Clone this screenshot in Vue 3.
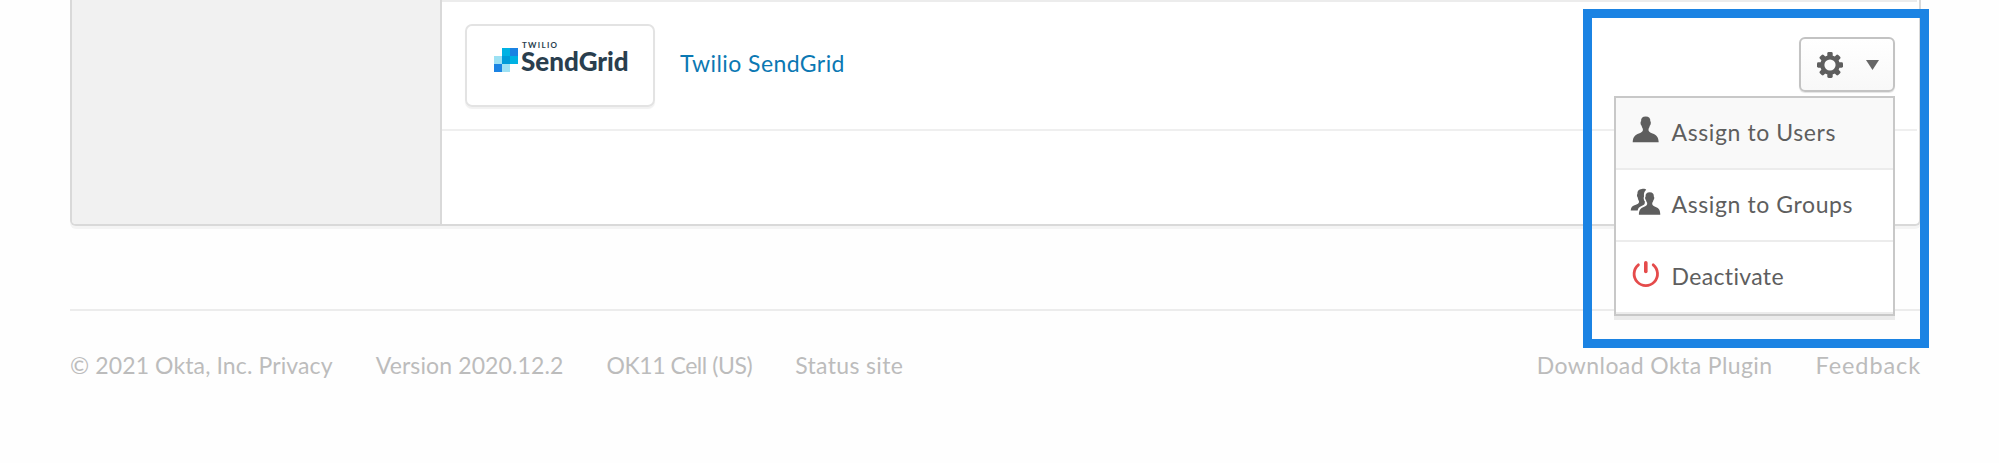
<script setup>
const leftLinks = [
  { text: '© 2021 Okta, Inc. Privacy', cls: 'privacy' },
  { text: 'Version 2020.12.2', cls: 'version' },
  { text: 'OK11 Cell (US)', cls: 'cell' },
  { text: 'Status site', cls: 'status' },
]
const rightLinks = [
  { text: 'Download Okta Plugin', cls: 'plugin' },
  { text: 'Feedback', cls: 'feedback' },
]
</script>

<template>
  <div class="page">
    <section class="card">
      <aside class="sidebar"></aside>
      <div class="list">
        <div class="row">
          <div class="logo-box">
            <svg class="mark" width="24" height="24" viewBox="0 0 24 24" shape-rendering="crispEdges">
              <path fill="#9de1f3" d="M0 8h8v8H0zM8 16h8v8H8z" />
              <path fill="#00b2e3" d="M8 0h8v8H8zM16 8h8v8h-8z" />
              <path fill="#009cd9" d="M8 8h8v8H8z" />
              <path fill="#1b83e3" d="M16 0h8v8h-8zM0 16h8v8H0z" />
            </svg>
            <div class="wordmark">
              <span class="twilio">TWILIO</span>
              <span class="sendgrid">SendGrid</span>
            </div>
          </div>
          <a class="app-name">Twilio SendGrid</a>
        </div>
      </div>
    </section>

    <footer class="footer">
      <nav class="group">
        <span v-for="l in leftLinks" :key="l.cls" :class="l.cls">{{ l.text }}</span>
      </nav>
      <nav class="group">
        <span v-for="l in rightLinks" :key="l.cls" :class="l.cls">{{ l.text }}</span>
      </nav>
    </footer>

    <div class="highlight">
      <button class="gear-button">
        <svg width="26" height="26" viewBox="-13 -13 26 26">
          <g fill="#5e5e5e">
            <rect v-for="a in 4" :key="a" x="-2.7" y="-13" width="5.4" height="26" rx="1.4" :transform="`rotate(${a * 45})`" />
            <circle r="9.8" />
          </g>
          <circle r="5.6" fill="#fcfcfc" />
        </svg>
        <svg class="caret" width="13" height="10" viewBox="0 0 13 10"><path fill="#666" d="M0 0h13L6.500 10z" /></svg>
      </button>
      <div class="menu">
        <div class="item active">
          <svg class="icon" width="30" height="28" viewBox="0 0 30 28">
            <path fill="#5e5e5e" d="M14.7 .4C18 .4 19.6 2.2 19.3 5.3C20.2 5.7 19.9 9 18.9 9.6C18.6 11 18.2 12 17.5 13C17.2 15.6 18.8 16.5 21.5 17.5C25.5 19 27.4 20.8 27.7 26.3H1.7C2 20.8 3.9 19 7.9 17.5C10.6 16.5 12.2 15.6 11.9 13C11.2 12 10.8 11 10.5 9.6C9.5 9 9.2 5.7 10.1 5.3C9.8 2.2 11.4 .4 14.7 .4Z" />
          </svg>
          <span class="users">Assign to Users</span>
        </div>
        <div class="item">
          <svg class="icon" width="30" height="28" viewBox="0 0 30 28">
            <path fill="#5e5e5e" d="M10.8 1C13 .6 14.5 1 15.2 1.8C13 3.5 12.8 6 13 8.5C12.3 10 12.8 12 13.8 13.2C14 16 13.5 16.8 11 17.8C8 19 7 20.5 6.7 22.6H-.3C0 19.5 1 18.3 3.5 17.3C6.5 16.2 8.3 15.5 8 13.2C7.3 12.2 6.9 11 6.7 9.5C5.8 8.5 5.8 6.5 6.4 6C6.2 3 7.5 1.4 10.8 1Z" />
            <path fill="#5e5e5e" stroke="#fff" stroke-width="2.4" paint-order="stroke" d="M18.7 4.3C21.7 4.3 23.1 5.9 22.8 8.6C23.6 9 23.4 11.5 22.5 12.1C22.2 13.3 21.9 14.2 21.2 15.1C21 17.3 22.4 18.1 24.7 19C27.9 20.3 29.2 21.9 29.3 26.7H7.9C8 21.9 9.5 20.3 12.7 19C15 18.1 16.4 17.3 16.2 15.1C15.5 14.2 15.2 13.3 14.9 12.1C14 11.5 13.8 9 14.6 8.6C14.3 5.9 15.7 4.3 18.7 4.3Z" />
          </svg>
          <span class="groups">Assign to Groups</span>
        </div>
        <div class="item">
          <svg class="icon" width="30" height="28" viewBox="0 0 30 28" fill="none" stroke="#e54b4b" stroke-linecap="round">
            <path stroke-width="2.8" d="M7.4 4.8a11.7 11.7 0 1 0 14.8 0" />
            <path stroke-width="3.6" d="M14.8 2.8v8.7" />
          </svg>
          <span class="deactivate">Deactivate</span>
        </div>
      </div>
    </div>
  </div>
</template>

<style>
html, body { margin: 0; background: #fefefe; overflow: hidden; }
</style>

<style scoped>
.page {
  position: relative;
  width: 1999px;
  height: 463px;
  box-sizing: border-box;
  padding: 0 78px 0 70px;
  background: #fefefe;
  font: 23px/28px Lato, "Open Sans", sans-serif;
  font-variant-ligatures: none;
  color: #5e5e5e;
  overflow: hidden;
}
span, a { white-space: nowrap; }
.card {
  display: flex;
  box-sizing: border-box;
  height: 226px;
  border: 2px solid #d9d9d9;
  border-top: 0;
  border-radius: 0 0 6px 6px;
  box-shadow: 0 3px 0 #f4f4f4;
  background: #fff;
}
.sidebar {
  width: 368px;
  border-right: 2px solid #d9d9d9;
  background: #f1f1f1;
  border-radius: 0 0 0 4px;
}
.list { flex: 1; padding-right: 2px; }
.row {
  display: flex;
  align-items: flex-start;
  box-sizing: border-box;
  height: 131px;
  padding: 22px 0 0 23px;
  border-top: 2px solid #ececec;
  border-bottom: 2px solid #efefef;
}
.logo-box {
  display: flex;
  box-sizing: border-box;
  width: 190px;
  height: 83px;
  padding: 22px 0 0 27px;
  border: 2px solid #e3e3e3;
  border-radius: 7px;
  box-shadow: 0 2px 1px #f1f1f1;
}
.mark { flex: none; }
.wordmark { display: flex; flex-direction: column; align-items: flex-start; margin: -7px 0 0 4px; color: #293e4e; }
.twilio { font-size: 8px; line-height: 8px; font-weight: 700; letter-spacing: 1.3px; }
.sendgrid { margin-left: -1px; font-size: 26px; line-height: 25px; font-weight: 900; }
.app-name { margin: 25px 0 0 25px; color: #0b78b3; letter-spacing: 0.43px; }
.footer {
  display: flex;
  justify-content: space-between;
  margin-top: 83px;
  padding-top: 40px;
  border-top: 2px solid #ececec;
  color: #bcbcbc;
}
.group { display: flex; gap: 43px; }
.privacy, .version { letter-spacing: 0.12px; }
.cell { letter-spacing: -0.45px; }
.status { letter-spacing: 0.35px; }
.plugin { letter-spacing: 0.41px; }
.feedback { font-size: 23.5px; letter-spacing: 0.9px; }
.highlight {
  position: absolute;
  left: 1583px;
  top: 9px;
  box-sizing: border-box;
  width: 346px;
  height: 339px;
  padding: 19px 25px 0 22px;
  border: 9px solid #1b83e3;
}
.gear-button {
  display: flex;
  align-items: center;
  justify-content: space-between;
  box-sizing: border-box;
  width: 96px;
  height: 55px;
  margin-left: auto;
  padding: 0 14px 0 16px;
  border: 2px solid #c3c3c3;
  border-radius: 6px;
  background: linear-gradient(#fff, #f8f8f8);
  box-shadow: 0 1px 1px #e4e4e4;
}
.menu {
  box-sizing: border-box;
  width: 281px;
  height: 220px;
  margin-top: 4px;
  border: 2px solid #c8c8c8;
  box-shadow: 0 4px 0 #ebebeb;
  background: #fff;
}
.item {
  display: flex;
  box-sizing: border-box;
  height: 72px;
  padding: 18px 0 0 15px;
  border-bottom: 2px solid #ececec;
}
.active { background: #f9f9f9; }
.icon { flex: none; overflow: visible; }
.item span { margin: 2px 0 0 10.5px; }
.users, .groups { letter-spacing: 0.6px; }
.deactivate { letter-spacing: 0.35px; }
</style>
